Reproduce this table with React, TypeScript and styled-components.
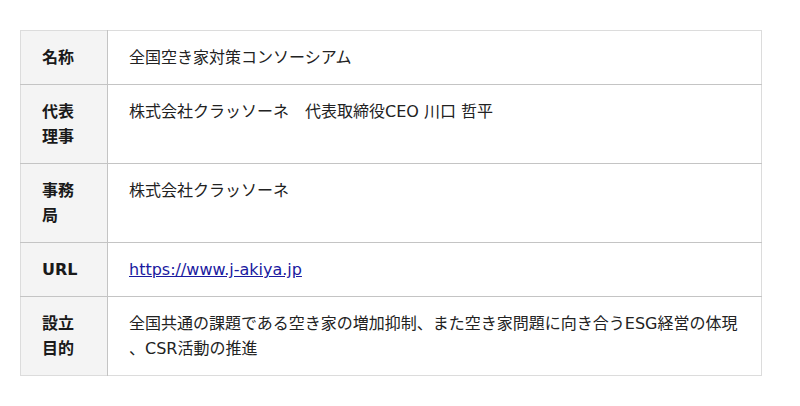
import React from "react";
import styled, { createGlobalStyle } from "styled-components";

const Global = createGlobalStyle`
  html, body { margin: 0; padding: 0; background: #fff; }
  body {
    font-family: "DejaVu Sans", "Noto Sans CJK JP", sans-serif;
    color: #222;
  }
`;

const Page = styled.div`
  padding: 30px 38px 30px 20px;
`;

const Table = styled.table`
  width: 742px;
  border-collapse: collapse;
  border: 1px solid #dcdcdc;
  font-size: 16px;
  line-height: 24.4px;
`;

const Row = styled.tr`
  border-top: 1px solid #c4c4c4;
  &:first-child { border-top: 1px solid #dcdcdc; }
`;

const HeadCell = styled.th`
  width: 44px;
  padding: 15px 21px 14px;
  background: #f4f4f4;
  border-right: 1px solid #c4c4c4;
  text-align: left;
  vertical-align: top;
  font-weight: bold;
  color: #1a1a1a;
`;

const DataCell = styled.td<{ $loose?: boolean }>`
  padding: 15px 21px 14px;
  vertical-align: top;
  color: #222;
  line-break: ${(p) => (p.$loose ? "anywhere" : "auto")};
`;

const Link = styled.a`
  color: #1a1aa0;
  text-decoration: underline;
`;

const rows: { head: string; body: React.ReactNode; loose?: boolean }[] = [
  { head: "名称", body: "全国空き家対策コンソーシアム" },
  { head: "代表理事", body: "株式会社クラッソーネ　代表取締役CEO 川口 哲平" },
  { head: "事務局", body: "株式会社クラッソーネ" },
  { head: "URL", body: <Link href="#">https://www.j-akiya.jp</Link> },
  {
    head: "設立目的",
    body: "全国共通の課題である空き家の増加抑制、また空き家問題に向き合うESG経営の体現、CSR活動の推進",
    loose: true,
  },
];

export default function App() {
  return (
    <>
      <Global />
      <Page>
        <Table>
          <tbody>
            {rows.map((r) => (
              <Row key={r.head}>
                <HeadCell>{r.head}</HeadCell>
                <DataCell $loose={r.loose}>{r.body}</DataCell>
              </Row>
            ))}
          </tbody>
        </Table>
      </Page>
    </>
  );
}
